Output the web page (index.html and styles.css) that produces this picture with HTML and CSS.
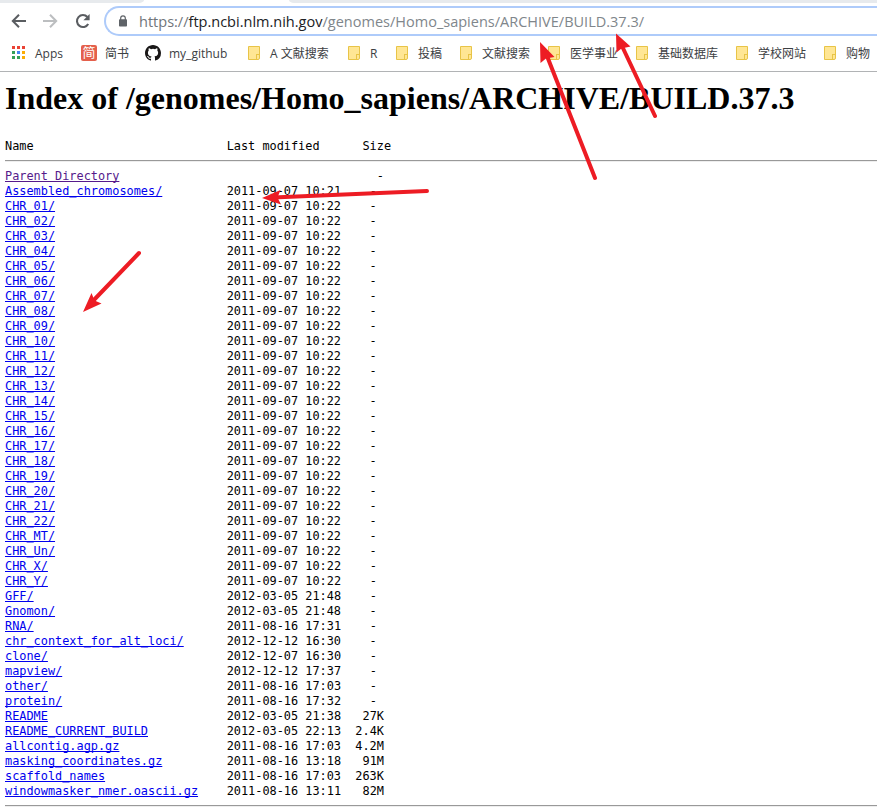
FILE: index.html
```
<!DOCTYPE html>
<html lang="zh-CN">
<head>
<meta charset="utf-8">
<title>Index of /genomes/Homo_sapiens/ARCHIVE/BUILD.37.3</title>
<link rel="stylesheet" href="styles.css">
</head>
<body>
<header class="browser">
  <div class="tabs"><i class="tab-left"></i><i class="tab-right"></i></div>
  <nav class="toolbar">
    <svg class="nav" viewBox="0 0 16 16"><path d="M15 8H2M8 1.7 1.8 8 8 14.3" fill="none" stroke="#5a5d61" stroke-width="2"/></svg>
    <svg class="nav" viewBox="0 0 16 16"><path d="M0 8h13M7 1.7 13.2 8 7 14.3" fill="none" stroke="#bcbec0" stroke-width="2"/></svg>
    <svg class="nav" viewBox="0 0 16 16"><path d="M13.2 11A6 6 0 1 1 12.4 4" fill="none" stroke="#5a5d61" stroke-width="2.1"/><path d="M14.6 1v6.2H8.4z" fill="#5a5d61"/></svg>
    <div class="omnibox">
      <svg class="lock" viewBox="0 0 8 12"><path d="M1.7 5V3.1a2.3 2.3 0 0 1 4.6 0V5" fill="none" stroke="#5f6368" stroke-width="1.2"/><rect y="4.3" width="8" height="7.2" rx=".8" fill="#5f6368"/></svg>
      <span class="url"><span class="scheme">https://</span><span class="host">ftp.ncbi.nlm.nih.gov</span><span class="path">/genomes/Homo_sapiens/ARCHIVE/BUILD.37.3/</span></span>
    </div>
  </nav>
  <nav class="bookmarks">
    <span class="mark apps"><svg viewBox="0 0 13 13" width="13" height="13"><path d="M0 0h3v3H0zM5 0h3v3H5zM10 0h3v3h-3z" fill="#ea4335"/><path d="M0 5h3v3H0zM0 10h3v3H0zM5 10h3v3H5z" fill="#34a058"/><path d="M5 5h3v3H5z" fill="#4285f4"/><path d="M10 5h3v3h-3zM10 10h3v3h-3z" fill="#fbad05"/></svg>Apps</span>
    <span class="mark jian"><b>简</b>简书</span>
    <span class="mark git"><svg viewBox="0 0 16 16" width="16" height="16"><path fill="#191717" d="M8 0C3.58 0 0 3.58 0 8c0 3.54 2.29 6.53 5.47 7.59.4.07.55-.17.55-.38 0-.19-.01-.82-.01-1.49-2.01.37-2.53-.49-2.69-.94-.09-.23-.48-.94-.82-1.13-.28-.15-.68-.52-.01-.53.63-.01 1.08.58 1.23.82.72 1.21 1.87.87 2.33.66.07-.52.28-.87.51-1.07-1.78-.2-3.64-.89-3.64-3.95 0-.87.31-1.59.82-2.15-.08-.2-.36-1.02.08-2.12 0 0 .67-.21 2.2.82a7.6 7.6 0 0 1 4 0c1.53-1.04 2.2-.82 2.2-.82.44 1.1.16 1.92.08 2.12.51.56.82 1.27.82 2.15 0 3.07-1.87 3.75-3.65 3.95.29.25.54.73.54 1.48 0 1.07-.01 1.93-.01 2.2 0 .21.15.46.55.38A8.01 8.01 0 0 0 16 8c0-4.42-3.58-8-8-8z"/></svg>my_github</span>
    <span class="mark"><i class="folder"></i>A 文献搜索</span>
    <span class="mark"><i class="folder"></i>R</span>
    <span class="mark"><i class="folder"></i>投稿</span>
    <span class="mark"><i class="folder"></i>文献搜索</span>
    <span class="mark"><i class="folder"></i>医学事业</span>
    <span class="mark"><i class="folder"></i>基础数据库</span>
    <span class="mark"><i class="folder"></i>学校网站</span>
    <span class="mark"><i class="folder"></i>购物</span>
  </nav>
</header>
<main>
<h1>Index of /genomes/Homo_sapiens/ARCHIVE/BUILD.37.3</h1>
<pre>Name                           Last modified      Size</pre>
<hr>
<pre class="list"><a class="visited">Parent Directory</a>                                    -
<a>Assembled_chromosomes/</a>         2011-09-07 10:21    -
<a>CHR_01/</a>                        2011-09-07 10:22    -
<a>CHR_02/</a>                        2011-09-07 10:22    -
<a>CHR_03/</a>                        2011-09-07 10:22    -
<a>CHR_04/</a>                        2011-09-07 10:22    -
<a>CHR_05/</a>                        2011-09-07 10:22    -
<a>CHR_06/</a>                        2011-09-07 10:22    -
<a>CHR_07/</a>                        2011-09-07 10:22    -
<a>CHR_08/</a>                        2011-09-07 10:22    -
<a>CHR_09/</a>                        2011-09-07 10:22    -
<a>CHR_10/</a>                        2011-09-07 10:22    -
<a>CHR_11/</a>                        2011-09-07 10:22    -
<a>CHR_12/</a>                        2011-09-07 10:22    -
<a>CHR_13/</a>                        2011-09-07 10:22    -
<a>CHR_14/</a>                        2011-09-07 10:22    -
<a>CHR_15/</a>                        2011-09-07 10:22    -
<a>CHR_16/</a>                        2011-09-07 10:22    -
<a>CHR_17/</a>                        2011-09-07 10:22    -
<a>CHR_18/</a>                        2011-09-07 10:22    -
<a>CHR_19/</a>                        2011-09-07 10:22    -
<a>CHR_20/</a>                        2011-09-07 10:22    -
<a>CHR_21/</a>                        2011-09-07 10:22    -
<a>CHR_22/</a>                        2011-09-07 10:22    -
<a>CHR_MT/</a>                        2011-09-07 10:22    -
<a>CHR_Un/</a>                        2011-09-07 10:22    -
<a>CHR_X/</a>                         2011-09-07 10:22    -
<a>CHR_Y/</a>                         2011-09-07 10:22    -
<a>GFF/</a>                           2012-03-05 21:48    -
<a>Gnomon/</a>                        2012-03-05 21:48    -
<a>RNA/</a>                           2011-08-16 17:31    -
<a>chr_context_for_alt_loci/</a>      2012-12-12 16:30    -
<a>clone/</a>                         2012-12-07 16:30    -
<a>mapview/</a>                       2012-12-12 17:37    -
<a>other/</a>                         2011-08-16 17:03    -
<a>protein/</a>                       2011-08-16 17:32    -
<a>README</a>                         2012-03-05 21:38   27K
<a>README_CURRENT_BUILD</a>           2012-03-05 22:13  2.4K
<a>allcontig.agp.gz</a>               2011-08-16 17:03  4.2M
<a>masking_coordinates.gz</a>         2011-08-16 13:18   91M
<a>scaffold_names</a>                 2011-08-16 17:03  263K
<a>windowmasker_nmer.oascii.gz</a>    2011-08-16 13:11   82M</pre>
<hr>
</main>
<svg class="arrows" viewBox="0 0 877 807">
  <g stroke="#ed1c24" stroke-width="4" stroke-linecap="round">
    <path d="M595 178 547 56M655 116 621.500 45M427 191 273 197.400M139 253 91 303"/>
  </g>
  <g fill="#ed1c24">
    <path d="M540 42 540.500 63 546 58.500 554.500 57z"/>
    <path d="M616 33.500 616.500 52.500 621.500 48.500 630.500 46.500z"/>
    <path d="M262 198 280.500 190 277.500 197.500 281 204.500z"/>
    <path d="M83 312 91.500 293 94.500 300.500 101.500 303.500z"/>
  </g>
</svg>
</body>
</html>
```
FILE: styles.css
```
* { box-sizing: border-box; }
body {
  margin: 0;
  height: 807px;
  overflow: hidden;
  background: #fff;
  color: #000;
}
.browser {
  height: 72px;
  border-bottom: 1px solid #b1b3b5;
  font-family: "Open Sans", "Noto Sans CJK SC", sans-serif;
}
.tabs { display: flex; justify-content: space-between; height: 3px; }
.tab-left { width: 144px; background: #e7eaed; border-bottom-right-radius: 5px 3px; }
.tab-right { width: 588px; background: #e7eaed; border-bottom-left-radius: 5px 3px; }
.toolbar { display: flex; align-items: center; height: 36px; padding-left: 11px; }
.nav { flex: none; width: 16px; height: 16px; margin-right: 16px; }
.nav:nth-child(3) { margin-right: 13px; }
.omnibox {
  display: flex;
  align-items: center;
  flex: 1;
  height: 30px;
  padding-left: 13px;
  border: 2px solid #aecbfa;
  border-right: 0;
  border-radius: 15px 0 0 15px;
}
.lock { width: 8px; height: 12px; margin-right: 12px; }
.url { font-size: 14.53px; line-height: 20px; white-space: nowrap; }
.scheme { color: #70757a; }
.host { color: #202124; }
.path { color: #80868b; }
.bookmarks {
  display: grid;
  grid-template-columns: 69px 64px 103px 100px 48px 64px 88px 88px 100px 88px 53px;
  align-items: center;
  height: 28px;
  padding-left: 12px;
  color: #3c4043;
  font-size: 12px;
  line-height: 18px;
  white-space: nowrap;
}
.mark { display: flex; align-items: center; padding-top: 2px; }
.mark > * { margin-bottom: 2px; }
.apps svg { margin-right: 10px; margin-bottom: 3px; }
.git svg { margin-right: 8px; }
.jian b {
  width: 16px;
  height: 16px;
  margin-right: 8px;
  border-radius: 2px;
  background: #e4604c;
  color: #fff;
  font-size: 13px;
  font-weight: 400;
  line-height: 15px;
  text-align: center;
}
.folder {
  display: flex;
  align-items: flex-end;
  justify-content: flex-end;
  width: 12px;
  height: 14px;
  margin-right: 10px;
  border: 1px solid #e8c447;
  border-bottom-right-radius: 2px;
  background: #ffe694;
}
.folder::after {
  content: "";
  width: 2px;
  height: 4px;
  border-left: 1px solid #e8c447;
  border-top: 1px solid #e8c447;
}
main { padding-left: 5px; }
h1 {
  margin: 8px 0 22px;
  font: bold 32px/37px "Liberation Serif", serif;
  white-space: nowrap;
}
pre {
  margin: 0;
  font: 11.89px/15px "DejaVu Sans Mono", monospace;
}
a { color: #00e; text-decoration: underline; text-decoration-thickness: 1px; text-underline-offset: 1px; text-decoration-skip-ink: none; }
.visited { color: #551a8b; }
hr { height: 2px; margin: 6px 0 7px; border: 0; border-top: 1px solid #999; background: #eee; }
main > hr:last-child { margin-bottom: 0; }
.arrows { position: absolute; top: 0; left: 0; width: 877px; height: 807px; pointer-events: none; }
```
